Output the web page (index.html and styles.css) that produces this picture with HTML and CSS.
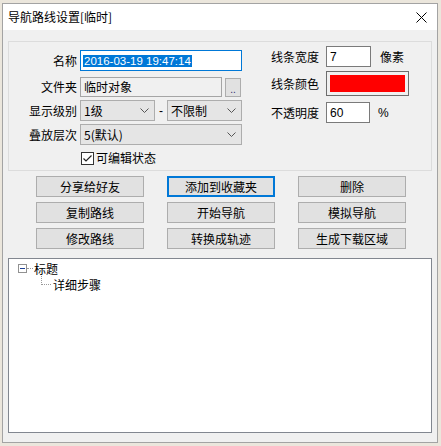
FILE: index.html
```html
<!DOCTYPE html>
<html>
<head>
<meta charset="utf-8">
<link rel="stylesheet" href="styles.css">
</head>
<body>
<div class="win">
  <div class="titlebar">
    <span class="title">导航路线设置[临时]</span>
    <svg class="close" width="11" height="11" viewBox="0 0 11 11"><path d="M0.5 0.5L10.5 10.5M10.5 0.5L0.5 10.5" stroke="#000" stroke-width="1" fill="none"/></svg>
  </div>
  <div class="client">
    <div class="group">
      <div class="lcol">
        <div class="frow r1">
          <span class="lbl">名称</span>
          <div class="tb name"><span class="sel">2016-03-19 19:47:14</span></div>
        </div>
        <div class="frow r2">
          <span class="lbl">文件夹</span>
          <div class="tb folder">临时对象</div>
          <div class="dots">..</div>
        </div>
        <div class="frow r3">
          <span class="lbl">显示级别</span>
          <div class="cb half"><span>1级</span><svg width="9" height="5" viewBox="0 0 9 5"><path d="M0.5 0.5L4.5 4.5L8.5 0.5" stroke="#555" fill="none"/></svg></div>
          <span class="dash">-</span>
          <div class="cb half"><span>不限制</span><svg width="9" height="5" viewBox="0 0 9 5"><path d="M0.5 0.5L4.5 4.5L8.5 0.5" stroke="#555" fill="none"/></svg></div>
        </div>
        <div class="frow r4">
          <span class="lbl">叠放层次</span>
          <div class="cb full"><span>5(默认)</span><svg width="9" height="5" viewBox="0 0 9 5"><path d="M0.5 0.5L4.5 4.5L8.5 0.5" stroke="#555" fill="none"/></svg></div>
        </div>
        <div class="frow r5">
          <span class="chk"><svg width="11" height="11" viewBox="0 0 11 11"><path d="M1.5 5.5L4 8L9.5 2.5" stroke="#222" stroke-width="1.2" fill="none"/></svg></span>
          <span class="chktext">可编辑状态</span>
        </div>
      </div>
      <div class="rcol">
        <div class="frow ra">
          <span class="rlbl">线条宽度</span>
          <div class="tb small w45">7</div>
          <span class="unit">像素</span>
        </div>
        <div class="frow rb">
          <span class="rlbl">线条颜色</span>
          <div class="color"><div class="swatch"></div></div>
        </div>
        <div class="frow rc">
          <span class="rlbl">不透明度</span>
          <div class="tb small w44">60</div>
          <span class="unit pct">%</span>
        </div>
      </div>
    </div>
    <div class="buttons">
      <div class="btn">分享给好友</div>
      <div class="btn focus">添加到收藏夹</div>
      <div class="btn">删除</div>
      <div class="btn">复制路线</div>
      <div class="btn">开始导航</div>
      <div class="btn">模拟导航</div>
      <div class="btn">修改路线</div>
      <div class="btn">转换成轨迹</div>
      <div class="btn">生成下载区域</div>
    </div>
    <div class="tree">
      <div class="node">
        <span class="exp"><span class="minus"></span></span>
        <span class="hline"></span>
        <span class="ntext">标题</span>
      </div>
      <div class="node child">
        <span class="elbow"></span>
        <span class="ntext">详细步骤</span>
      </div>
    </div>
  </div>
</div>
</body>
</html>
```
FILE: styles.css
```css
* { box-sizing: border-box; }
html, body { margin: 0; padding: 0; }
body {
  width: 441px;
  height: 446px;
  overflow: hidden;
  background: #ebe6dc;
  padding: 3px 0 0 2px;
  font-family: "Noto Sans CJK SC", "Liberation Sans", sans-serif;
  font-size: 12px;
  color: #000;
}
.win {
  width: 436px;
  height: 440px;
  border: 1px solid #a3a3a3;
  background: #f0f0f0;
  display: flex;
  flex-direction: column;
}
.titlebar {
  flex: none;
  height: 26px;
  background: #fff;
  display: flex;
  align-items: center;
  justify-content: space-between;
  padding: 0 10px 0 5px;
}
.title { line-height: 14px; }
.close { display: block; }
.client {
  flex: 1;
  display: flex;
  flex-direction: column;
  padding: 11px 5px 9px 5px;
}
.group {
  flex: none;
  height: 130px;
  border: 1px solid #dcdcdc;
  display: flex;
  align-items: flex-start;
}
.lcol {
  width: 225px;
  margin-left: 8px;
  padding-top: 8px;
  display: flex;
  flex-direction: column;
}
.frow { display: flex; align-items: center; }
.r1 { height: 21px; margin-bottom: 6px; }
.r2 { height: 20px; margin-bottom: 3px; }
.r3 { height: 21px; margin-bottom: 3px; }
.r4 { height: 21px; margin-bottom: 6px; }
.r5 { height: 14px; padding-left: 64px; }
.lbl {
  flex: none;
  width: 60px;
  margin-right: 3px;
  text-align: right;
  line-height: 14px;
}
.tb {
  height: 100%;
  border: 1px solid #7a7a7a;
  background: #fff;
  padding-left: 2px;
  display: flex;
  align-items: center;
  font-family: "Liberation Sans", "Noto Sans CJK SC", sans-serif;
  font-size: 12px;
  line-height: 14px;
  white-space: nowrap;
  overflow: hidden;
}
.name { width: 162px; border-color: #0078d7; }
.sel {
  background: #0078d7;
  color: #fff;
  font-size: 11.5px;
  line-height: 12px;
  padding: 0 1px;
}
.folder {
  width: 142px;
  background: #f0f0f0;
  border-color: #a5a5a5;
  padding-left: 3px;
  font-family: "Noto Sans CJK SC", sans-serif;
}
.dots {
  width: 16px;
  height: 19px;
  margin-left: 3px;
  border: 1px solid #adadad;
  background: #e1e1e1;
  font-family: "Liberation Sans", sans-serif;
  font-size: 10px;
  line-height: 22px;
  text-align: center;
  color: #2a2a6a;
}
.cb {
  height: 100%;
  border: 1px solid #adadad;
  background: #e5e5e5;
  display: flex;
  align-items: center;
  justify-content: space-between;
  padding: 0 5px 0 3px;
  line-height: 14px;
}
.cb svg { display: block; }
.half { width: 75px; }
.full { width: 162px; }
.dash {
  width: 12px;
  text-align: center;
  font-family: "Liberation Sans", sans-serif;
}
.chk {
  width: 13px;
  height: 13px;
  border: 1px solid #333;
  background: #fff;
  display: flex;
  align-items: center;
  justify-content: center;
}
.chk svg { display: block; }
.chktext { margin-left: 2px; line-height: 14px; }
.rcol {
  margin-left: 29px;
  padding-top: 4px;
  display: flex;
  flex-direction: column;
}
.ra { height: 21px; margin-bottom: 4px; }
.rb { height: 25px; margin-bottom: 6px; }
.rc { height: 21px; }
.rlbl {
  width: 48px;
  margin-right: 7px;
  text-align: right;
  line-height: 14px;
}
.small { padding-left: 3px; }
.w45 { width: 45px; }
.w44 { width: 44px; }
.unit { margin-left: 9px; line-height: 14px; }
.pct { margin-left: 8px; font-family: "Liberation Sans", sans-serif; }
.color {
  width: 83px;
  height: 25px;
  border: 1px solid #6d6d6d;
  padding: 3px;
  background: #f0f0f0;
}
.swatch { width: 100%; height: 100%; background: #ff0000; }
.buttons {
  flex: none;
  margin-top: 5px;
  padding-left: 28px;
  display: grid;
  grid-template-columns: 108px 108px 108px;
  grid-auto-rows: 21px;
  column-gap: 23px;
  row-gap: 5px;
}
.btn {
  border: 1px solid #adadad;
  background: #e1e1e1;
  display: flex;
  align-items: center;
  justify-content: center;
  line-height: 14px;
}
.btn.focus { border: 2px solid #0078d7; }
.tree {
  flex: 1;
  margin-top: 9px;
  border: 1px solid #828790;
  background: #fff;
  padding: 1px 0 0 9px;
}
.node {
  height: 17px;
  display: flex;
  align-items: center;
}
.exp {
  width: 9px;
  height: 9px;
  border: 1px solid #919191;
  background: #fff;
  display: flex;
  align-items: center;
  justify-content: center;
}
.minus { width: 5px; height: 1px; background: #1c3f94; }
.hline {
  width: 6px;
  height: 0;
  border-top: 1px dotted #9a9a9a;
  margin-right: 1px;
}
.ntext { line-height: 14px; }
.child { padding-left: 23px; align-items: flex-start; }
.elbow {
  width: 10px;
  height: 9px;
  margin-top: -1px;
  border-left: 1px dotted #9a9a9a;
  border-bottom: 1px dotted #9a9a9a;
  margin-right: 2px;
}
.child .ntext { margin-top: 1px; }
```
